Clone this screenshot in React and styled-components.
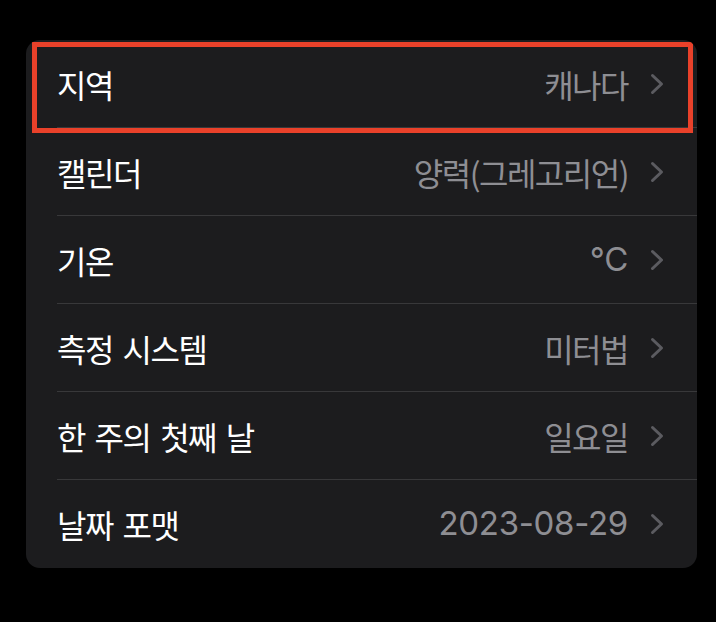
import React from "react";
import styled, { createGlobalStyle } from "styled-components";

const Global = createGlobalStyle`
  html, body { margin: 0; padding: 0; background: #000; }
  body { font-family: "Noto Sans CJK KR", "Noto Sans", sans-serif; }
`;

const Page = styled.div`
  width: 716px;
  height: 622px;
  background: #000;
  padding: 40px 0 0 26px;
  box-sizing: border-box;
`;

const Card = styled.div`
  position: relative;
  width: 671px;
  background: #1c1c1e;
  border-radius: 14px;
  overflow: hidden;
`;

const Row = styled.div`
  padding-left: 31px;
`;

const RowInner = styled.div`
  height: 87px;
  display: flex;
  align-items: center;
  justify-content: space-between;
  padding-right: 33px;
  border-bottom: 1px solid ${(p) => (p.$last ? "transparent" : "#38383a")};
`;

const Label = styled.span`
  color: #fff;
  font-family: "Noto Sans CJK KR", sans-serif;
  font-size: 32px;
  letter-spacing: -1.5px;
  word-spacing: 4px;
  line-height: 1;
`;

const Right = styled.div`
  display: flex;
  align-items: center;
  gap: 22px;
`;

const Value = styled.span`
  color: #8e8e93;
  font-family: ${(p) =>
    p.$latin ? `"Inter", "Noto Sans", sans-serif` : `"Noto Sans CJK KR", sans-serif`};
  font-size: ${(p) => (p.$latin ? "33px" : "32px")};
  letter-spacing: ${(p) => (p.$latin ? "-0.3px" : "-1.5px")};
  line-height: 1;
`;

const Highlight = styled.div`
  position: absolute;
  left: 6px;
  top: 2px;
  width: 661px;
  height: 91px;
  border: 5px solid #e9412a;
  box-sizing: border-box;
  pointer-events: none;
`;

const Chevron = () => (
  <svg width="14" height="22" viewBox="0 0 14 22" fill="none">
    <polyline
      points="2.5,2.5 11.5,11 2.5,19.5"
      stroke="#5b5b60"
      strokeWidth="3"
      strokeLinecap="round"
      strokeLinejoin="round"
    />
  </svg>
);

const rows = [
  { label: "지역", value: "캐나다" },
  { label: "캘린더", value: "양력(그레고리언)" },
  { label: "기온", value: "°C", latin: true },
  { label: "측정 시스템", value: "미터법" },
  { label: "한 주의 첫째 날", value: "일요일" },
  { label: "날짜 포맷", value: "2023-08-29", latin: true },
];

export default function App() {
  return (
    <>
      <Global />
      <Page>
        <Card>
          {rows.map((r, i) => (
            <Row key={r.label}>
              <RowInner $last={i === rows.length - 1}>
                <Label>{r.label}</Label>
                <Right>
                  <Value $latin={r.latin}>{r.value}</Value>
                  <Chevron />
                </Right>
              </RowInner>
            </Row>
          ))}
          <Highlight />
        </Card>
      </Page>
    </>
  );
}
